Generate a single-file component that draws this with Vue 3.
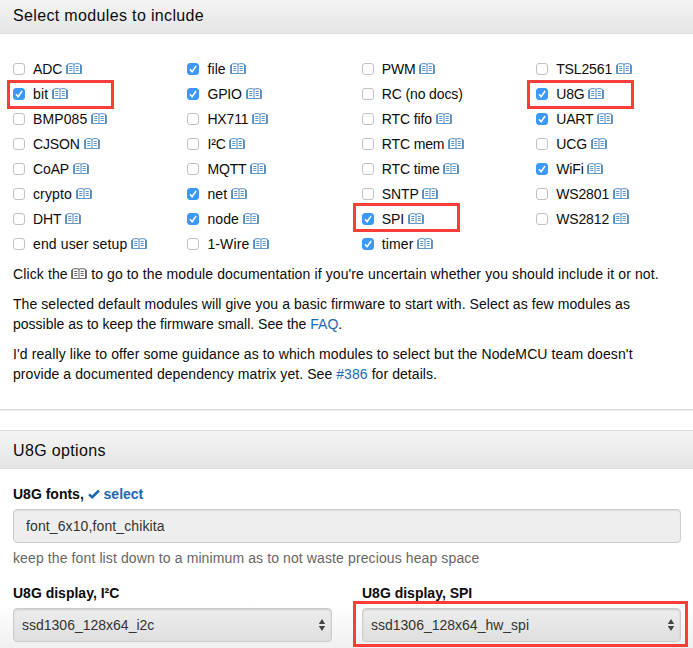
<script setup>
import { h } from 'vue'

const columns = [
  [['ADC'], ['bit', true, 'bit'], ['BMP085'], ['CJSON'], ['CoAP'], ['crypto'], ['DHT'], ['end user setup']],
  [['file', true], ['GPIO', true], ['HX711'], ['I²C'], ['MQTT'], ['net', true], ['node', true], ['1-Wire']],
  [['PWM'], ['RC (no docs)'], ['RTC fifo'], ['RTC mem'], ['RTC time'], ['SNTP'], ['SPI', true, 'spi'], ['timer', true]],
  [['TSL2561'], ['U8G', true, 'u8g'], ['UART', true], ['UCG'], ['WiFi', true], ['WS2801'], ['WS2812']],
].map((column) => column.map(([name, checked = false, marker = '']) => ({
  name,
  checked,
  marker,
  tight: /^[A-Z]/.test(name) && name !== 'BMP085',
})))

const BookIcon = () =>
  h('svg', { viewBox: '0 0 16 12', width: 16, height: 12, fill: 'none', stroke: 'currentColor' }, [
    h('path', { d: 'M1.5 10V1.3C3.5.4 6.5.4 8 1.3 9.5.4 12.5.4 14.5 1.3V10M8 1.3V10', 'stroke-width': '.85' }),
    h('path', { d: 'M.5 2V10.5H15.5V2', 'stroke-width': '.75' }),
    h('path', { d: 'M3.2 3.5H6.3M3.2 5.5H6.3M3.2 7.5H6.3M9.7 3.5H12.8M9.7 5.5H12.8M9.7 7.5H12.8', 'stroke-width': '.8' }),
  ])
</script>

<template>
  <main class="page">
    <section class="panel modules-panel">
      <h2 class="heading first">Select modules to include</h2>
      <div class="modules">
        <div v-for="(column, i) in columns" :key="i" class="column">
          <label v-for="item in column" :key="item.name" class="module">
            <span class="box" :class="{ checked: item.checked }">
              <svg v-if="item.checked" viewBox="0 0 12 12"><path d="M3 6.2 5.1 8.7 9.1 3" /></svg>
            </span>
            <span class="name" :class="{ tight: item.tight }">{{ item.name }}</span>
            <BookIcon v-if="item.name !== 'RC (no docs)'" class="book" />
            <span v-if="item.marker" class="marker" :class="item.marker"></span>
          </label>
        </div>
      </div>
      <div class="copy">
        <p class="loose">Click the <BookIcon class="inline-book" /> to go to the module documentation if you're uncertain whether you should include it or not.</p>
        <p><span class="medium">The selected default modules will give you a basic firmware to start with. Select as few modules as</span><br />possible as to keep the firmware small. See the <a>FAQ</a>.</p>
        <p><span class="loose">I'd really like to offer some guidance as to which modules to select but the NodeMCU team doesn't</span><br /><span class="medium">provide a documented dependency matrix yet. See <a>#386</a> for details.</span></p>
      </div>
    </section>

    <section class="panel options-panel">
      <h2 class="heading">U8G options</h2>
      <div class="options">
        <div class="field-title">U8G fonts,
          <a><svg class="tick" viewBox="0 0 12 10"><path d="M1 5.4 4.2 8.2 11 1.5" /></svg> select</a>
        </div>
        <div class="input loose">font_6x10,font_chikita</div>
        <div class="hint loose">keep the font list down to a minimum as to not waste precious heap space</div>
        <div class="displays">
          <div class="display">
            <div class="field-title">U8G display, I²C</div>
            <div class="select"><span>ssd1306_128x64_i2c</span><svg viewBox="0 0 8 14"><path d="M4 1 7.2 6H.8ZM.8 8H7.2L4 13Z" /></svg></div>
          </div>
          <div class="display">
            <div class="field-title">U8G display, SPI</div>
            <div class="select"><span>ssd1306_128x64_hw_spi</span><svg viewBox="0 0 8 14"><path d="M4 1 7.2 6H.8ZM.8 8H7.2L4 13Z" /></svg><i class="marker"></i></div>
          </div>
        </div>
      </div>
    </section>
  </main>
</template>

<style>
body { margin: 0; overflow: hidden; background: #fff; }
</style>

<style scoped>
.page { width: 693px; height: 648px; overflow: hidden; color: #0c0c0c; font: 14px/20px "Liberation Sans", Arial, sans-serif; background: #fff; }
.panel { box-sizing: border-box; }
.modules-panel { height: 410px; border-bottom: 1px solid #d8d8d8; box-shadow: 0 1px 1px #f0f0f0; }
.heading { box-sizing: border-box; height: 39px; margin: 0; padding: 0 13px; font-size: 16px; line-height: 39px; font-weight: 400; letter-spacing: .35px; border-top: 1px solid #ddd; border-bottom: 1px solid #ddd; background: linear-gradient(#f4f4f4, #e5e5e5); }
.heading.first { height: 34px; line-height: 31px; border-top: 0; }
.modules { display: grid; grid-template-columns: repeat(4, 174.4px); padding: 22.5px 0 0 13px; height: 207.5px; }
.module { position: relative; display: flex; align-items: center; height: 25px; }
.box { box-sizing: border-box; width: 12px; height: 12px; margin-right: 8px; border: 1px solid #c2c2c2; border-radius: 3px; background: #fff; }
.box.checked { border-color: #3b99fc; background: #3b99fc; }
.box svg { display: block; width: 12px; height: 12px; margin: -1px; fill: none; stroke: #fff; stroke-width: 1.5; }
.name { letter-spacing: .12px; white-space: nowrap; }
.name.tight { letter-spacing: -.13px; }
.book { margin-left: 3.8px; color: #3477b5; }
.marker { position: absolute; box-sizing: border-box; border: 3px solid #fc3d39; pointer-events: none; }
.module .marker { left: -6px; top: -1.5px; width: 107px; height: 29px; }
.module .marker.spi { left: -9px; top: -3.5px; }
.module .marker.u8g { left: -9.2px; }
.copy { padding-left: 13px; white-space: nowrap; }
.copy p { margin: 0 0 10px; }
.loose { letter-spacing: .11px; }
.medium { letter-spacing: .07px; }
.inline-book { margin: 0 0 0 -.5px; vertical-align: -1px; color: #444; }
a { color: #1b68b0; }
.options-panel { margin-top: 20px; height: 218px; background: linear-gradient(#fff 80%, #f0f0f0); }
.options { padding: 15px 12px 0 13px; }
.field-title { font-weight: 700; line-height: 20px; }
.tick { width: 12px; height: 10px; fill: none; stroke: currentColor; stroke-width: 2.5; }
.input { box-sizing: border-box; height: 34px; margin-top: 5px; padding: 0 12px; line-height: 32px; color: #333; background: #eee; border: 1px solid #ccc; border-radius: 4px; box-shadow: inset 0 1px 1px #ddd; }
.hint { margin-top: 5px; color: #666; }
.displays { display: grid; grid-template-columns: 319px 319px; column-gap: 30px; margin-top: 15px; }
.select { position: relative; box-sizing: border-box; display: flex; align-items: center; justify-content: space-between; height: 34px; margin-top: 5px; padding: 0 5px 0 8px; color: #333; background: linear-gradient(#ededed, #dfdfdf); border: 1px solid #ccc; border-radius: 4px; box-shadow: inset 0 1px 2px #ccc; }
.select svg { width: 8px; height: 14px; fill: #444; }
.select .marker { left: -10px; top: -8px; width: 335px; height: 46px; }
</style>
